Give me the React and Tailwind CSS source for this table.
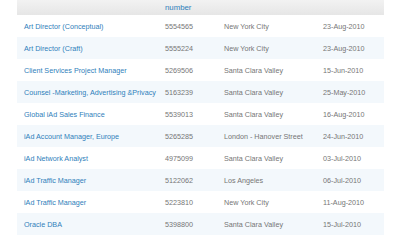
export default function App() {
  const rows = [
    ["Art Director (Conceptual)", "5554565", "New York City", "23-Aug-2010"],
    ["Art Director (Craft)", "5555224", "New York City", "23-Aug-2010"],
    ["Client Services Project Manager", "5269506", "Santa Clara Valley", "15-Jun-2010"],
    ["Counsel -Marketing, Advertising &Privacy", "5163239", "Santa Clara Valley", "25-May-2010"],
    ["Global iAd Sales Finance", "5539013", "Santa Clara Valley", "16-Aug-2010"],
    ["iAd Account Manager, Europe", "5265285", "London - Hanover Street", "24-Jun-2010"],
    ["iAd Network Analyst", "4975099", "Santa Clara Valley", "03-Jul-2010"],
    ["iAd Traffic Manager", "5122062", "Los Angeles", "06-Jul-2010"],
    ["iAd Traffic Manager", "5223810", "New York City", "11-Aug-2010"],
    ["Oracle DBA", "5398800", "Santa Clara Valley", "15-Jul-2010"],
  ];
  return (
    <div className="w-[400px] h-[240px] overflow-hidden bg-white" style={{ fontFamily: '"Liberation Sans", Arial, sans-serif' }}>
      <div className="ml-[17px] w-[367px]">
        <div className="grid grid-cols-[141px_59px_99px_68px] h-[15px] bg-gradient-to-b from-[#f2f2f2] to-[#e6e6e6] text-[7.8px] text-[#2f80bb]">
          <div></div>
          <div className="pl-[7px] leading-[9px] pt-[3px]">number</div>
          <div></div>
          <div></div>
        </div>
        {rows.map((r, i) => (
          <div
            key={i}
            className={`grid grid-cols-[141px_59px_99px_68px] h-[22px] items-center text-[7.2px] leading-[9px] ${i % 2 === 1 ? "bg-[#f3f8fc]" : "bg-white"}`}
          >
            <div className="pl-[7px] text-[#2f80bb] whitespace-nowrap">{r[0]}</div>
            <div className="pl-[7px] text-[#767676]">{r[1]}</div>
            <div className="pl-[7px] text-[#767676] whitespace-nowrap">{r[2]}</div>
            <div className="pl-[7px] text-[#767676] whitespace-nowrap">{r[3]}</div>
          </div>
        ))}
      </div>
    </div>
  );
}
